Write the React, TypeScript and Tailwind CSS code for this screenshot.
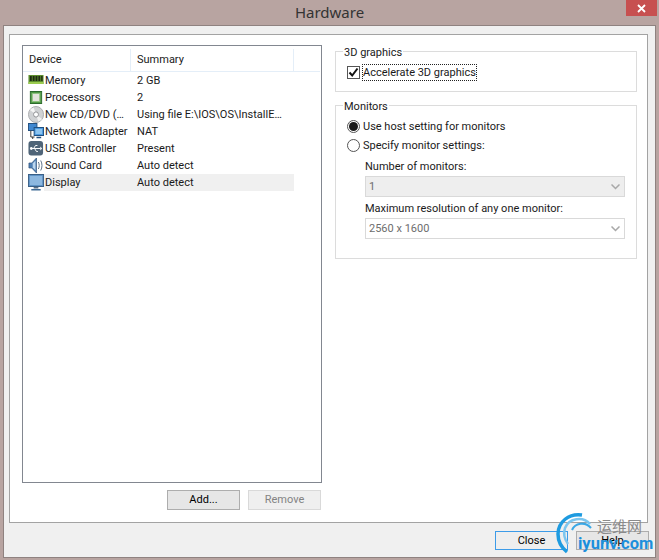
import React from 'react';

const rows: { icon: React.ReactNode; device: string; summary: string; selected?: boolean }[] = [
  { icon: <MemoryIcon />, device: 'Memory', summary: '2 GB' },
  { icon: <CpuIcon />, device: 'Processors', summary: '2' },
  { icon: <DiscIcon />, device: 'New CD/DVD (…', summary: 'Using file E:\\IOS\\OS\\InstallE…' },
  { icon: <NetworkIcon />, device: 'Network Adapter', summary: 'NAT' },
  { icon: <UsbIcon />, device: 'USB Controller', summary: 'Present' },
  { icon: <SoundIcon />, device: 'Sound Card', summary: 'Auto detect' },
  { icon: <DisplayIcon />, device: 'Display', summary: 'Auto detect', selected: true },
];

function MemoryIcon() {
  return (
    <svg width="16" height="17" viewBox="0 0 17 17" preserveAspectRatio="none">
      <rect x="0.5" y="3" width="16" height="9" fill="#5d8f2f" />
      <rect x="2" y="4" width="2" height="5" fill="#1f2a14" />
      <rect x="5" y="4" width="2" height="5" fill="#1f2a14" />
      <rect x="8" y="4" width="2" height="5" fill="#1f2a14" />
      <rect x="11" y="4" width="2" height="5" fill="#1f2a14" />
      <rect x="14" y="4" width="1.5" height="5" fill="#1f2a14" />
      <rect x="0.5" y="10" width="16" height="2" fill="#9ccc50" />
    </svg>
  );
}

function CpuIcon() {
  return (
    <svg width="16" height="17" viewBox="0 0 17 17" preserveAspectRatio="none">
      <rect x="2.500" y="2.500" width="12" height="12" fill="#4f9a45" stroke="#2c6b2c" />
      <rect x="4.500" y="4.500" width="8" height="8" fill="#e4e4dc" stroke="#8fbf7f" />
    </svg>
  );
}

function DiscIcon() {
  return (
    <svg width="16" height="17" viewBox="0 0 17 17" preserveAspectRatio="none">
      <circle cx="8.5" cy="8.5" r="8" fill="#d0d2d4" stroke="#a9abae" />
      <path d="M8.5 8.5 L2 4 A8 8 0 0 1 6 1.500 Z" fill="#f4f4f4" />
      <path d="M8.5 8.5 L15 13 A8 8 0 0 1 11 15.500 Z" fill="#f0f0f0" />
      <circle cx="8.5" cy="8.5" r="2.600" fill="#fff" stroke="#8f9194" />
    </svg>
  );
}

function NetworkIcon() {
  return (
    <svg width="16" height="17" viewBox="0 0 17 17" preserveAspectRatio="none">
      <rect x="0.5" y="0.5" width="9" height="7" fill="#3f87d0" stroke="#24507f" />
      <path d="M3 8v6h4M5 14v2" stroke="#333" fill="none" />
      <rect x="6.5" y="4.5" width="10" height="8" fill="#4b9ae0" stroke="#1f4f80" />
      <rect x="8" y="6" width="7" height="5" fill="#8cc4f0" />
      <path d="M9 14.500h5" stroke="#24507f" strokeWidth="1.500" />
    </svg>
  );
}

function UsbIcon() {
  return (
    <svg width="16" height="17" viewBox="0 0 17 17" preserveAspectRatio="none">
      <rect x="0.5" y="1" width="15.5" height="14.500" rx="3" fill="#4f6478" />
      <path d="M3 8.500h10M6 8.500l2-3h2M7 8.500l2 3h1.500" stroke="#fff" fill="none" />
      <path d="M13 6.500l2 2-2 2z" fill="#fff" />
      <circle cx="3.500" cy="8.500" r="1.400" fill="#fff" />
    </svg>
  );
}

function SoundIcon() {
  return (
    <svg width="16" height="17" viewBox="0 0 17 17" preserveAspectRatio="none">
      <path d="M1 6h3l5-5v15l-5-5H1z" fill="#4d7fb5" stroke="#2d4f78" strokeWidth="0.700" />
      <path d="M5 6.500l3-3v10l-3-3z" fill="#bcd6ee" />
      <path d="M11 5c1.200 2 1.200 5 0 7M13.500 3.500c1.800 3 1.800 7 0 10" stroke="#5a6f86" fill="none" />
    </svg>
  );
}

function DisplayIcon() {
  return (
    <svg width="16" height="17" viewBox="0 0 17 17" preserveAspectRatio="none">
      <rect x="0.5" y="0.5" width="16" height="12" fill="#5f93c6" stroke="#3a5f86" />
      <rect x="2" y="2" width="13" height="9" fill="#8db8e0" />
      <path d="M6 13h5v1.500H6z" fill="#5a6f86" />
      <path d="M3.500 15h10v1.500h-10z" fill="#3f6a95" />
    </svg>
  );
}

const Chevron = () => (
  <svg width="9" height="6" viewBox="0 0 9 6" className="mr-[4px]">
    <path d="M0.500 0.500 L4.500 4.500 L8.500 0.500" stroke="#a8a8a8" strokeWidth="1.500" fill="none" />
  </svg>
);

const Group = ({ title, className, children }: { title: string; className: string; children: React.ReactNode }) => (
  <div className={`relative border border-[#dcdcdc] ${className}`}>
    <span className="absolute -top-[6px] left-[7px] bg-white px-[1px] leading-[14px]">{title}</span>
    {children}
  </div>
);

const Radio = ({ on, label }: { on?: boolean; label: string }) => (
  <div className="flex items-center h-[19px]">
    <span className="w-[13px] h-[13px] rounded-full border border-[#555] bg-white flex items-center justify-center">
      {on && <span className="w-[9px] h-[9px] rounded-full bg-[#1a1a1a]" />}
    </span>
    <span className="ml-[3px] pt-[2px]">{label}</span>
  </div>
);

const Select = ({ value, className }: { value: string; className: string }) => (
  <div className={`h-[21px] border border-[#d9d9d9] flex items-center justify-between pl-[3px] text-[#6d6d6d] ${className}`}>
    <span className="pt-[2px]">{value}</span>
    <Chevron />
  </div>
);

const Button = ({ label, disabled, focus, className = '' }: { label: string; disabled?: boolean; focus?: boolean; className?: string }) => (
  <button
    className={`w-[73px] flex items-center justify-center border ${
      disabled
        ? 'border-[#d9d9d9] bg-[#efefef] text-[#838383]'
        : focus
          ? 'border-[#3c9be8] bg-[#eeeeee] text-black'
          : 'border-[#adadad] bg-[#e6e6e6] text-black'
    } ${className}`}
  >
    {label}
  </button>
);

export default function App() {
  return (
    <div
      className="relative w-[659px] h-[560px] overflow-hidden bg-[#b8a4a1] flex flex-col text-[11px] text-[#1a1a1a]"
      style={{ fontFamily: 'Roboto, "Noto Sans CJK SC", sans-serif' }}
    >
      <div
        className="relative h-[25px] shrink-0 flex items-center justify-center text-[15px] text-[#333]"
        style={{ fontFamily: '"Noto Sans", sans-serif' }}
      >
        Hardware
        <div className="absolute right-[2px] top-0 w-[31px] h-[16px] bg-[#c75050] flex items-center justify-center">
          <svg width="9" height="9" viewBox="0 0 9 9">
            <path d="M1 1L8 8M8 1L1 8" stroke="#fff" strokeWidth="1.800" />
          </svg>
        </div>
      </div>

      <div className="w-[653px] h-[533px] ml-[3px] border border-[#8f8280] bg-[#f0f0f0] flex flex-col">
        <div className="w-[639px] h-[489px] ml-[5px] mt-[8px] border border-[#a3a3a3] bg-white flex">
          <div className="ml-[12px] mt-[10px] w-[300px] flex flex-col">
            <div className="h-[438px] border border-[#828790] flex flex-col">
              <div className="h-[26px] flex border-b border-[#e4eef8] mr-[1px] pt-[3px]">
                <div className="w-[108px] pl-[6px] flex items-center border-r border-[#e4eef8]">Device</div>
                <div className="w-[163px] pl-[6px] flex items-center border-r border-[#e4eef8]">Summary</div>
              </div>
              {rows.map((r) => (
                <div key={r.device} className="h-[17px] flex items-center">
                  <div className="w-[21px] flex items-center justify-end shrink-0">{r.icon}</div>
                  <div className={`w-[250px] h-full flex items-center pt-[2px] ${r.selected ? 'bg-[#f0f0f0]' : ''}`}>
                    <span className="w-[93px] pl-[1px] whitespace-nowrap overflow-hidden">{r.device}</span>
                    <span className="whitespace-nowrap">{r.summary}</span>
                  </div>
                </div>
              ))}
            </div>
            <div className="flex justify-end gap-[8px] mt-[7px] mr-[1px] h-[20px]">
              <Button label="Add..." />
              <Button label="Remove" disabled />
            </div>
          </div>

          <div className="ml-[13px] mt-[16px] w-[302px] flex flex-col">
            <Group title="3D graphics" className="h-[41px]">
              <div className="flex items-center ml-[11px] mt-[12px] h-[17px]">
                <span className="w-[13px] h-[13px] border border-[#555] bg-white flex items-center justify-center">
                  <svg width="11" height="11" viewBox="0 0 11 11">
                    <path d="M1.500 5.500L4.200 8.500L9.500 1.500" stroke="#111" strokeWidth="2" fill="none" />
                  </svg>
                </span>
                <span className="ml-[2px] border border-dotted border-[#222] h-[17px] leading-[15px]">
                  Accelerate 3D graphics
                </span>
              </div>
            </Group>
            <Group title="Monitors" className="h-[154px] mt-[13px]">
              <div className="ml-[11px] mt-[11px]">
                <Radio on label="Use host setting for monitors" />
                <Radio label="Specify monitor settings:" />
                <div className="ml-[18px] mt-[4px] leading-[16px]">Number of monitors:</div>
                <Select value="1" className="ml-[18px] w-[260px] mt-[1px] bg-[#eeeeee]" />
                <div className="ml-[18px] mt-[4px] leading-[16px]">Maximum resolution of any one monitor:</div>
                <Select value="2560 x 1600" className="ml-[18px] w-[260px] mt-[1px] bg-white" />
              </div>
            </Group>
          </div>
        </div>

        <div className="flex justify-end gap-[8px] mt-[8px] mr-[6px] h-[19px]">
          <Button label="Close" focus className="pt-[2px]" />
          <Button label="Help" className="pt-[2px]" />
        </div>
      </div>

      {/* watermark */}
      <div className="absolute left-[555px] top-[510px] w-[104px] h-[50px] pointer-events-none">
        <svg width="60" height="50" viewBox="0 0 60 50" className="absolute left-0 top-0">
          <path d="M27 5C14 3 3 12 3 24c0 8 4 14 9 18" stroke="#1e9be0" strokeWidth="3.500" fill="none" />
          <path d="M35 14C28 6 14 8 10 18c-2 6 0 12 3 16" stroke="#7cc6ef" strokeWidth="2.500" fill="none" />
          <path d="M36 18C30 11 20 13 17 20" stroke="#3aa8e6" strokeWidth="2" fill="none" />
        </svg>
        <span className="absolute left-[42px] top-[8px] text-[15px] leading-[18px] text-[#8a8a8a] whitespace-nowrap">运维网</span>
        <span className="absolute left-[23px] top-[24px] text-[16.5px] leading-[20px] font-bold text-[#1c8fdc] whitespace-nowrap">iyunv.com</span>
      </div>
    </div>
  );
}
